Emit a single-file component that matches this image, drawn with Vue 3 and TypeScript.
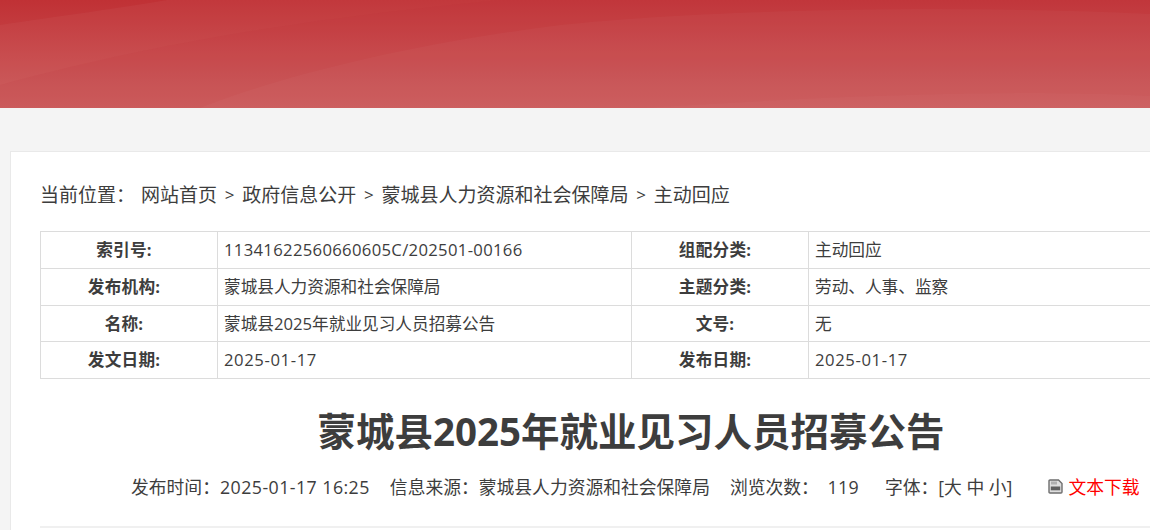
<script setup lang="ts">
const crumbs = ['网站首页', '政府信息公开', '蒙城县人力资源和社会保障局', '主动回应']
const rows = [
  { a: '索引号:', b: '11341622560660605C/202501-00166', c: '组配分类:', d: '主动回应', bClass: 'code', dClass: '' },
  { a: '发布机构:', b: '蒙城县人力资源和社会保障局', c: '主题分类:', d: '劳动、人事、监察', bClass: '', dClass: '' },
  { a: '名称:', b: '蒙城县2025年就业见习人员招募公告', c: '文号:', d: '无', bClass: '', dClass: '' },
  { a: '发文日期:', b: '2025-01-17', c: '发布日期:', d: '2025-01-17', bClass: 'date', dClass: 'date' },
]
</script>

<template>
  <div class="page">
    <header class="banner">
      <svg class="banner-art" width="1150" height="108" viewBox="0 0 1150 108" aria-hidden="true">
        <defs>
          <linearGradient id="redFade" x1="0" y1="0" x2="0" y2="1">
            <stop offset="0" stop-color="#c03135" />
            <stop offset="1" stop-color="#cc5b5b" />
          </linearGradient>
        </defs>
        <rect width="1150" height="108" fill="url(#redFade)" />
        <path d="M0 25 C60 16 120 8 167 0 L1150 0 L1150 108 L0 108 Z" fill="#fff" opacity="0.035" />
        <path d="M0 85 C130 50 270 22 500 0 L1150 0 L1150 108 L0 108 Z" fill="#bd2f36" opacity="0.09" />
        <path d="M200 108 C270 80 400 45 560 25 C700 10 950 4 1150 14 L1150 108 Z" fill="#fff" opacity="0.028" />
        <path d="M640 108 C800 98 1000 88 1150 96 L1150 108 Z" fill="#fff" opacity="0.02" />
      </svg>
    </header>

    <main class="card">
      <nav class="crumbs">
        <span class="crumbs-label">当前位置：</span>
        <template v-for="(crumb, i) in crumbs" :key="crumb">
          <span v-if="i" class="crumbs-sep">&gt;</span>
          <a class="crumb">{{ crumb }}</a>
        </template>
      </nav>

      <table class="info">
        <colgroup>
          <col class="col-key" /><col class="col-val" /><col class="col-key" /><col class="col-val" />
        </colgroup>
        <tbody>
          <tr v-for="row in rows" :key="row.a">
            <th>{{ row.a }}</th>
            <td :class="row.bClass">{{ row.b }}</td>
            <th>{{ row.c }}</th>
            <td :class="row.dClass">{{ row.d }}</td>
          </tr>
        </tbody>
      </table>

      <h1 class="title">蒙城县2025年就业见习人员招募公告</h1>

      <div class="meta">
        <span>发布时间：<span class="stamp">2025-01-17 16:25</span></span>
        <span>信息来源：蒙城县人力资源和社会保障局</span>
        <span>浏览次数： <i class="num">119</i></span>
        <span class="size">字体：[大 中 小]</span>
        <a class="download">
          <svg class="save" width="15" height="15" viewBox="0 0 15 15" aria-hidden="true">
            <path d="M1 2 Q1 1 2 1 H10.5 L14 4.5 V13 Q14 14 13 14 H2 Q1 14 1 13 Z" fill="#dedede" stroke="#6e6e6e" stroke-width="1.4" />
            <rect x="2.8" y="7.5" width="9.4" height="3.8" fill="#5f5f5f" />
            <rect x="3" y="2.5" width="6" height="3" fill="#b0b0b0" />
          </svg>
          文本下载
        </a>
      </div>
    </main>
  </div>
</template>

<style>
html, body { margin: 0; background: #f4f4f4; overflow: hidden; }
</style>

<style scoped>
.page {
  width: 1150px;
  height: 530px;
  overflow: hidden;
  background: #f4f4f4;
  color: #3d3d3d;
  font-family: "Open Sans", "Noto Sans CJK SC", sans-serif;
}
.banner { height: 108px; }
.banner-art { display: block; }
.card {
  box-sizing: border-box;
  width: 1240px;
  height: 400px;
  margin: 43px 0 0 10px;
  padding: 0 29px;
  background: #fff;
  border: 1px solid #e9e9e9;
  border-right: 0;
  border-bottom: 0;
}
.crumbs {
  display: flex;
  align-items: center;
  height: 24px;
  margin-top: 31px;
  font-size: 19px;
  line-height: 24px;
}
.crumbs-label { margin-right: 6px; white-space: nowrap; }
.crumbs-sep { margin: 0 7.75px; font-size: 17px; }
.crumb { white-space: nowrap; }
.info {
  table-layout: fixed;
  border-collapse: collapse;
  width: 1182px;
  margin-top: 24px;
  font-size: 16.67px;
}
.col-key { width: 177px; }
.col-val { width: 414px; }
.info th, .info td {
  height: 36px;
  padding: 0;
  border: 1px solid #dcdcdc;
  line-height: 22px;
  white-space: nowrap;
}
.info tr:nth-child(3) th, .info tr:nth-child(3) td { height: 35px; }
.info th { font-weight: 700; text-align: center; padding-right: 10px; letter-spacing: 0.2px; }
.info td { padding-left: 6px; font-weight: 400; }
.info td.code { letter-spacing: 0.32px; }
.info td.date { letter-spacing: 0.6px; }
.title {
  width: 1182px;
  margin: 27px 0 0;
  font-size: 38.5px;
  line-height: 50px;
  font-weight: 700;
  text-align: center;
  white-space: nowrap;
}
.meta {
  display: flex;
  align-items: center;
  gap: 20px;
  box-sizing: content-box;
  width: 1091px;
  height: 26px;
  margin-top: 17px;
  padding: 0 0 27px 91px;
  border-bottom: 2px solid #f0f0f0;
  font-size: 17.8px;
  white-space: nowrap;
}
.stamp { letter-spacing: 0.45px; }
.num { font-style: normal; margin-left: 4px; letter-spacing: 0.3px; }
.size { margin-left: 6px; }
.download { display: flex; align-items: center; gap: 5px; margin-left: 16px; color: #f00; }
.save { flex: none; }
</style>
